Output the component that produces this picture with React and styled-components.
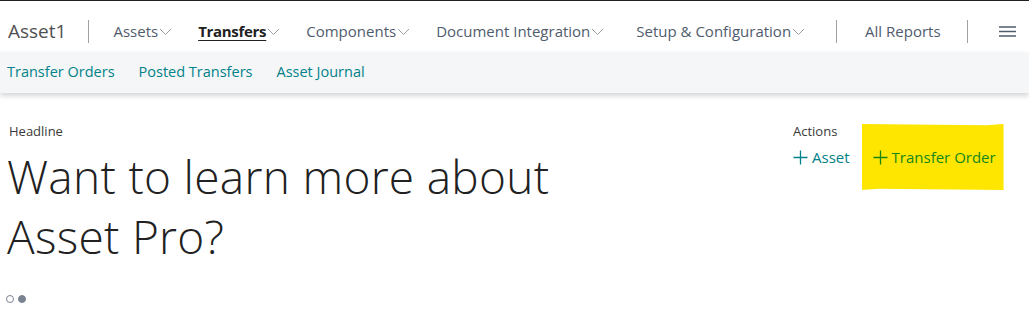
import React from 'react';
import styled, { createGlobalStyle } from 'styled-components';

const GlobalStyle = createGlobalStyle`
  html, body {
    margin: 0;
    padding: 0;
    background: #fff;
    font-family: "Open Sans", "Noto Sans", sans-serif;
    color: #212121;
  }
  * { box-sizing: border-box; }
`;

const Page = styled.div`
  width: 1029px;
  height: 311px;
  overflow: hidden;
  border-top: 1px solid #212121;
`;

const TopNav = styled.nav`
  height: 51px;
  display: flex;
  align-items: center;
  padding: 9px 0 0 8px;
  background: #fff;
`;

const Brand = styled.div`
  font-size: 19px;
  color: #505050;
  padding-right: 22px;
`;

const Divider = styled.span`
  width: 1px;
  height: 23px;
  background: #a0a0a0;
  margin: 0 ${p => p.$right ?? 24}px 0 ${p => p.$left ?? 0}px;
`;

const NavItem = styled.a`
  display: flex;
  align-items: center;
  font-size: 15px;
  color: ${p => (p.$active ? '#212121' : '#505c6d')};
  font-weight: ${p => (p.$active ? 700 : 400)};
  margin-right: ${p => p.$gap ?? 26}px;
  white-space: nowrap;
  text-decoration: none;
`;

const NavText = styled.span`
  text-decoration: ${p => (p.$active ? 'underline' : 'none')};
  text-underline-offset: 3px;
  text-decoration-thickness: 1px;
  letter-spacing: ${p => (p.$active ? '-0.3px' : '0')};
`;

const Caret = styled.svg`
  width: 13px;
  height: 8px;
  margin-left: 1px;
  margin-top: 2px;
`;

const Menu = styled.svg`
  width: 17px;
  height: 11px;
  margin-left: 31px;
`;

const SubNav = styled.div`
  height: 41px;
  background: #f5f6f7;
  display: flex;
  align-items: center;
  gap: 24px;
  padding: 0 0 3px 7px;
  box-shadow: 0 3px 5px rgba(0, 0, 0, 0.16);
  position: relative;
`;

const SubLink = styled.a`
  font-size: 14.5px;
  color: #00828a;
  text-decoration: none;
  white-space: nowrap;
`;

const Content = styled.main`
  display: flex;
  justify-content: space-between;
  padding: 29px 0 0 9px;
`;

const Left = styled.section`
  display: flex;
  flex-direction: column;
`;

const Label = styled.div`
  font-size: 13px;
  color: #3a3a3a;
  line-height: 18px;
`;

const Headline = styled.h1`
  margin: 6px 0 0 -2px;
  font-family: "Open Sans", sans-serif;
  font-weight: 300;
  font-size: 46px;
  line-height: 60px;
  color: #212121;
  width: 580px;
  letter-spacing: 0.3px;
`;

const Dots = styled.div`
  display: flex;
  gap: 4px;
  margin: 29px 0 0 -3px;
`;

const Dot = styled.span`
  width: 8px;
  height: 8px;
  border-radius: 50%;
  border: 1px solid #7a8190;
  background: ${p => (p.$filled ? '#7a8190' : 'transparent')};
`;

const Actions = styled.section`
  display: flex;
  flex-direction: column;
  width: 236px;
`;

const ActionRow = styled.div`
  display: flex;
  align-items: center;
  margin-top: 7px;
`;

const ActionBtn = styled.a`
  display: flex;
  align-items: center;
  gap: 4px;
  font-size: 15px;
  color: ${p => (p.$marked ? '#14861c' : '#00828a')};
  text-decoration: none;
  white-space: nowrap;
  position: relative;
  isolation: isolate;
  margin-left: ${p => p.$offset ?? 0}px;
`;

// hand-drawn marker highlight lying behind the action
const Highlight = styled.i`
  position: absolute;
  left: -11px;
  top: -23px;
  width: 142px;
  height: 66px;
  background: #ffe600;
  clip-path: polygon(0 0, 88% 2%, 100% 0, 100% 100%, 12% 98%, 0 100%);
  z-index: -1;
`;

const Plus = ({ color }) => (
  <svg width="15" height="15" viewBox="0 0 15 15">
    <path d="M7.5 0.5v14M0.5 7.5h14" stroke={color} strokeWidth="1.3" fill="none" />
  </svg>
);

const Chevron = () => (
  <Caret viewBox="0 0 13 8">
    <path d="M1 1l5.5 5.5L12 1" stroke="#9aa0a8" strokeWidth="1" fill="none" />
  </Caret>
);

const menu = [
  { label: 'Assets' },
  { label: 'Transfers', active: true },
  { label: 'Components' },
  { label: 'Document Integration', gap: 32 },
  { label: 'Setup & Configuration', gap: 31 },
];

const App = () => (
  <>
    <GlobalStyle />
    <Page>
      <TopNav>
        <Brand>Asset1</Brand>
        <Divider />
        {menu.map(m => (
          <NavItem key={m.label} $active={m.active} $gap={m.gap}>
            <NavText $active={m.active}>{m.label}</NavText>
            <Chevron />
          </NavItem>
        ))}
        <Divider $right={28} />
        <NavItem>All Reports</NavItem>
        <Divider $right={0} $left={0} />
        <Menu viewBox="0 0 17 11">
          <path d="M0 1h17M0 5.5h17M0 10h17" stroke="#505c6d" strokeWidth="1.4" />
        </Menu>
      </TopNav>
      <SubNav>
        <SubLink>Transfer Orders</SubLink>
        <SubLink>Posted Transfers</SubLink>
        <SubLink>Asset Journal</SubLink>
      </SubNav>
      <Content>
        <Left>
          <Label>Headline</Label>
          <Headline>Want to learn more about Asset Pro?</Headline>
          <Dots>
            <Dot />
            <Dot $filled />
          </Dots>
        </Left>
        <Actions>
          <Label>Actions</Label>
          <ActionRow>
            <ActionBtn>
              <Plus color="#00828a" />
              Asset
            </ActionBtn>
            <ActionBtn $marked $offset={23}>
              <Highlight />
              <Plus color="#14861c" />
              Transfer Order
            </ActionBtn>
          </ActionRow>
        </Actions>
      </Content>
    </Page>
  </>
);

export default App;
